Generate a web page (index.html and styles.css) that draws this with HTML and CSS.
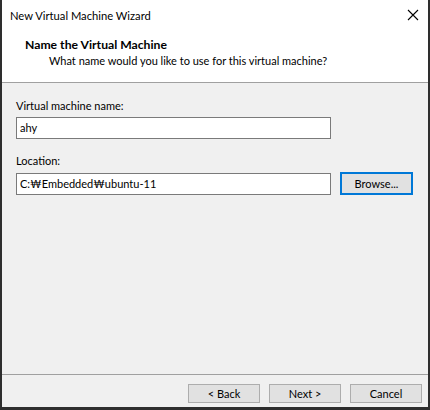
FILE: index.html
```html
<!DOCTYPE html>
<html>
<head>
<meta charset="utf-8">
<link rel="stylesheet" href="styles.css">
</head>
<body>
<div class="window">
  <div class="titlebar">
    <span class="title">New Virtual Machine Wizard</span>
    <svg class="close" width="12" height="12" viewBox="0 0 12 12"><path d="M1 1L11 11M11 1L1 11" stroke="#000" stroke-width="1.1" fill="none"/></svg>
  </div>
  <div class="header">
    <div class="h-title">Name the Virtual Machine</div>
    <div class="h-sub">What name would you like to use for this virtual machine?</div>
  </div>
  <div class="content">
    <div class="label">Virtual machine name:</div>
    <div class="field"><div class="input">ahy</div></div>
    <div class="label loc">Location:</div>
    <div class="field">
      <div class="input">C:₩Embedded₩ubuntu-11</div>
      <div class="btn browse">Browse...</div>
    </div>
  </div>
  <div class="footer">
    <div class="btn">&lt; Back</div>
    <div class="btn next">Next &gt;</div>
    <div class="btn cancel">Cancel</div>
  </div>
</div>
</body>
</html>
```
FILE: styles.css
```css
html, body {
  margin: 0;
  padding: 0;
}
body {
  background: #2e2e2e;
  width: 430px;
  height: 410px;
  overflow: hidden;
  font-family: Lato, "Noto Sans CJK KR", sans-serif;
  font-size: 11px;
  color: #000;
}
.window {
  margin-left: 2px;
  width: 426px;
  height: 407px;
  background: #f0f0f0;
  display: flex;
  flex-direction: column;
}
.titlebar {
  height: 30px;
  background: #fff;
  display: flex;
  align-items: center;
  justify-content: space-between;
  padding: 0 8px 0 8px;
}
.title {
  font-size: 11.2px;
  color: #000;
}
.close {
  margin-right: 1px;
}
.header {
  background: #fff;
  border-bottom: 1px solid #a0a0a0;
  box-sizing: border-box;
  height: 53px;
  padding: 7px 0 0 23px;
}
.h-title {
  font-weight: bold;
  font-size: 12.2px;
  line-height: 16px;
}
.h-sub {
  padding-left: 24px;
  line-height: 16px;
}
.content {
  flex: 1;
  padding: 15px 0 0 14px;
  display: flex;
  flex-direction: column;
}
.label {
  line-height: 16px;
  margin-bottom: 3px;
}
.label.loc {
  margin-top: 14px;
}
.field {
  display: flex;
  gap: 9px;
  align-items: center;
}
.input {
  width: 310px;
  height: 20px;
  border: 1px solid #7a7a7a;
  background: #fff;
  line-height: 20px;
  padding-left: 3px;
  box-sizing: content-box;
}
.btn {
  height: 17px;
  border: 1px solid #adadad;
  background: #e1e1e1;
  text-align: center;
  line-height: 17px;
  width: 70px;
}
.browse {
  border: 2px solid #0078d7;
  width: 69px;
  height: 19px;
  line-height: 19px;
}
.footer {
  border-top: 1px solid #a0a0a0;
  height: 33px;
  box-sizing: border-box;
  display: flex;
  justify-content: flex-end;
  gap: 9px;
  padding: 9px 6px 0 0;
}
```
